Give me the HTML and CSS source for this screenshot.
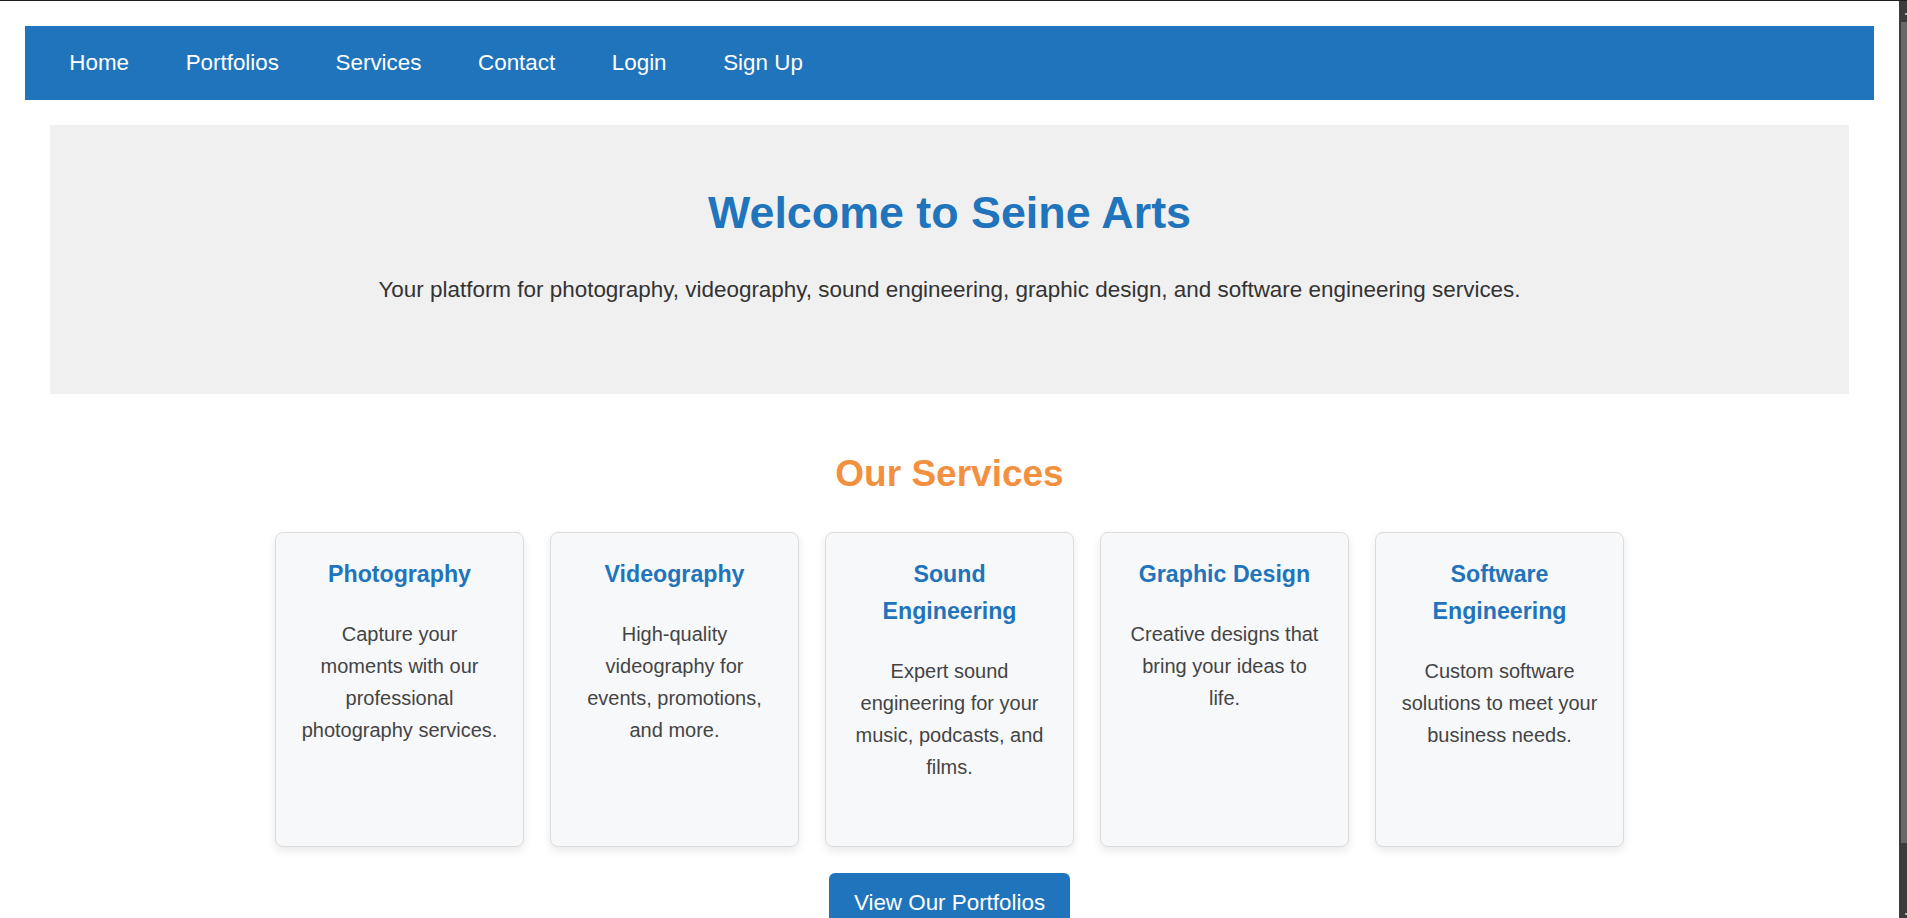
FILE: index.html
```html
<!DOCTYPE html>
<html lang="en">
<head>
<meta charset="utf-8">
<title>Seine Arts</title>
<link rel="stylesheet" href="styles.css">
</head>
<body>
  <div class="page">
    <nav class="navbar">
      <a class="nav-link" href="#">Home</a>
      <a class="nav-link" href="#">Portfolios</a>
      <a class="nav-link" href="#">Services</a>
      <a class="nav-link" href="#">Contact</a>
      <a class="nav-link" href="#">Login</a>
      <a class="nav-link" href="#">Sign Up</a>
    </nav>
    <main class="main">
      <section class="hero">
        <h1 class="hero-title">Welcome to Seine Arts</h1>
        <p class="hero-text">Your platform for photography, videography, sound engineering, graphic design, and software engineering services.</p>
      </section>
      <section class="services">
        <h2 class="services-title">Our Services</h2>
        <div class="cards">
          <div class="card">
            <h3 class="card-title">Photography</h3>
            <p class="card-text">Capture your moments with our professional photography services.</p>
          </div>
          <div class="card">
            <h3 class="card-title">Videography</h3>
            <p class="card-text">High-quality videography for events, promotions, and more.</p>
          </div>
          <div class="card">
            <h3 class="card-title">Sound Engineering</h3>
            <p class="card-text">Expert sound engineering for your music, podcasts, and films.</p>
          </div>
          <div class="card">
            <h3 class="card-title">Graphic Design</h3>
            <p class="card-text">Creative designs that bring your ideas to life.</p>
          </div>
          <div class="card">
            <h3 class="card-title">Software Engineering</h3>
            <p class="card-text">Custom software solutions to meet your business needs.</p>
          </div>
        </div>
        <a class="btn" href="#">View Our Portfolios</a>
      </section>
    </main>
  </div>
  <div class="scrollbar">
    <div class="sb-arrow sb-up"></div>
    <div class="sb-thumb"></div>
    <div class="sb-track"></div>
    <div class="sb-arrow sb-down"></div>
  </div>
</body>
</html>
```

FILE: styles.css
```css
html, body {
  margin: 0;
  height: 100%;
}

body {
  display: flex;
  overflow: hidden;
  background: #ffffff;
  font-family: "Liberation Sans", Arial, sans-serif;
}

.page {
  flex: 1;
  min-width: 0;
  border-top: 1px solid #1e1e1e;
  padding: 25px 25px 0;
  overflow: hidden;
}

/* navigation */
.navbar {
  display: flex;
  align-items: center;
  height: 74px;
  padding-left: 16px;
  background: #1f74bc;
}

.nav-link {
  padding: 0 28.3px;
  color: #ffffff;
  text-decoration: none;
  font-size: 22.4px;
}

/* main */
.main {
  padding: 25px 25px 0;
}

.hero {
  background: #f0f0f0;
  text-align: center;
  padding: 62px 20px 92px;
}

.hero-title {
  margin: 0;
  font-size: 44.8px;
  line-height: 1.15;
  font-weight: bold;
  color: #1f74bc;
}

.hero-text {
  margin: 38px 0 0;
  font-size: 22.45px;
  line-height: 1.15;
  color: #333333;
}

.services {
  padding-top: 59px;
  text-align: center;
}

.services-title {
  margin: 0 0 36px;
  font-size: 37px;
  line-height: 1.15;
  font-weight: bold;
  color: #f39040;
}

.cards {
  display: flex;
  justify-content: center;
  gap: 26px;
}

.card {
  box-sizing: border-box;
  width: 249px;
  height: 315px;
  padding: 23px 24px;
  background: #f7f8fa;
  border: 1px solid #dcdcdc;
  border-radius: 8px;
  box-shadow: 0 4px 10px rgba(0, 0, 0, 0.09);
}

.card-title {
  margin: 0 0 25px;
  font-size: 23.2px;
  line-height: 37px;
  font-weight: bold;
  color: #1f74bc;
}

.card-text {
  margin: 0;
  font-size: 20px;
  line-height: 32px;
  color: #444444;
}

.btn {
  display: inline-block;
  margin-top: 26px;
  padding: 17px 25px;
  background: #1f74bc;
  color: #ffffff;
  text-decoration: none;
  font-size: 22.4px;
  border-radius: 6px;
}

/* scrollbar strip */
.scrollbar {
  width: 8px;
  display: flex;
  flex-direction: column;
  background: #3c3c3c;
  border-top: 1px solid #1e1e1e;
}

.sb-arrow {
  height: 21px;
  position: relative;
}

.sb-up::after,
.sb-down::after {
  content: "";
  position: absolute;
  right: 0;
  width: 2px;
  height: 2px;
  background: #b5b5b5;
}

.sb-up::after {
  top: 12px;
}

.sb-down::after {
  bottom: 3px;
}

.sb-thumb {
  height: 821px;
  margin-left: 2px;
  background: #686868;
}

.sb-track {
  flex: 1;
}

.sb-down {
  height: 8px;
}
```
